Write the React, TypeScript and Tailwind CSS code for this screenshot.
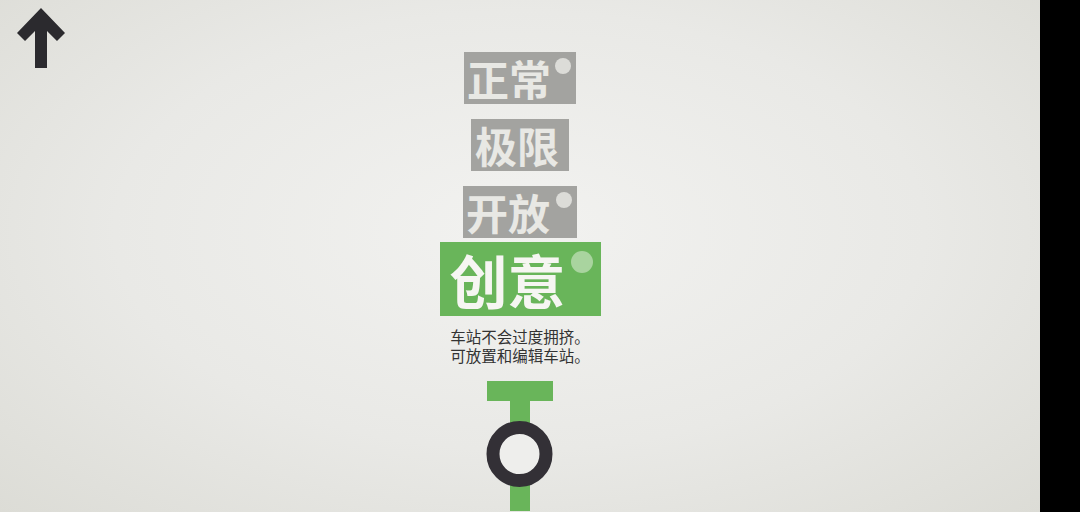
import React from "react";

const cjk = { fontFamily: '"Noto Sans CJK SC", "Noto Sans", sans-serif' };

const Dot = ({ big }: { big?: boolean }) => (
  <span
    className={
      big
        ? "absolute right-[8px] top-[9px] h-[22px] w-[22px] rounded-full bg-[#a9d49f]"
        : "absolute right-[5px] top-[6px] h-[16px] w-[16px] rounded-full bg-[#dcdcd8]"
    }
  />
);

const ModeBox = ({
  label,
  width,
  pad,
  dot,
}: {
  label: string;
  width: string;
  pad: string;
  dot?: boolean;
}) => (
  <div className={`relative flex h-[52px] items-center bg-[#a3a3a0] ${width} ${pad}`}>
    <span className="text-[42px] font-bold leading-none text-[#e8e8e4]" style={cjk}>
      {label}
    </span>
    {dot && <Dot />}
  </div>
);

export default function App() {
  return (
    <div className="flex h-[512px] w-[1080px] overflow-hidden">
      <div className="relative h-full w-[1040px] overflow-hidden bg-[radial-gradient(ellipse_at_50%_45%,#f2f2f0_0%,#e9e9e6_55%,#dcdcd6_100%)]">
        {/* back arrow */}
        <svg className="absolute left-[17px] top-[8px]" width="48" height="61" viewBox="0 0 48 61">
          <path d="M24 0 L48 25 L40 33 L30 23 L30 60 L18 60 L18 23 L8 33 L0 25 Z" fill="#2b2a2e" />
        </svg>

        <div className="flex flex-col items-center pt-[52px]">
          <ModeBox label="正常" width="w-[112px]" pad="pl-[3px]" dot />
          <div className="h-[15px]" />
          <ModeBox label="极限" width="w-[98px]" pad="pl-[4px]" />
          <div className="h-[15px]" />
          <ModeBox label="开放" width="w-[114px]" pad="pl-[3px]" dot />
          <div className="h-[4px]" />
          <div className="relative flex h-[74px] w-[161px] items-center bg-[#69b55a] pl-[10px]">
            <span className="text-[58px] font-bold leading-none text-[#f6f6f2]" style={cjk}>
              创意
            </span>
            <Dot big />
          </div>

          <p className="mt-[11px] text-center text-[15.5px] leading-[19px] text-[#333333]" style={cjk}>
            车站不会过度拥挤。
            <br />
            可放置和编辑车站。
          </p>

          {/* line terminus with station */}
          <svg className="mt-[16px] shrink-0" width="68" height="130" viewBox="0 0 68 130">
            <rect x="1" y="0" width="66" height="20" fill="#69b55a" />
            <rect x="24" y="0" width="20" height="130" fill="#69b55a" />
            <circle cx="33.5" cy="73" r="26.5" fill="#eeeeec" stroke="#333036" strokeWidth="13" />
          </svg>
        </div>
      </div>
      <div className="h-full w-[40px] bg-black" />
    </div>
  );
}
